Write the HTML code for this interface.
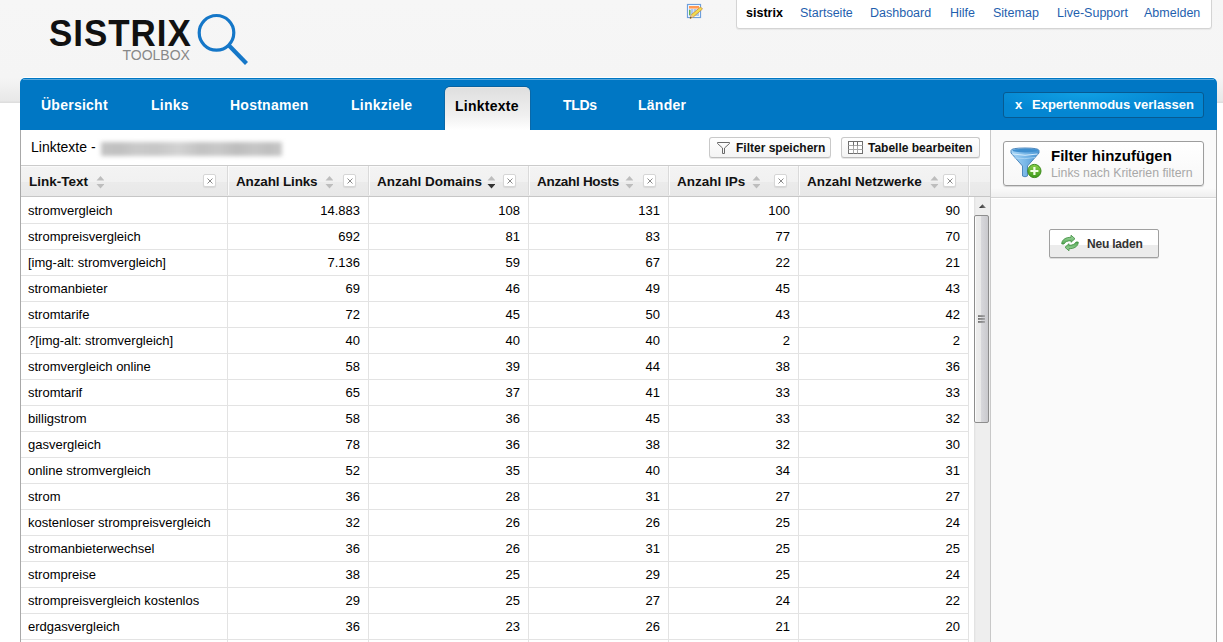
<!DOCTYPE html>
<html><head><meta charset="utf-8">
<style>
*{box-sizing:border-box;margin:0;padding:0}
html,body{width:1223px;height:642px;overflow:hidden;background:#fff;font-family:"Liberation Sans",sans-serif;color:#000}
.abs{position:absolute}
#hdr{position:absolute;left:0;top:0;width:1223px;height:103px;background:linear-gradient(#f6f6f6 0,#f5f5f5 78px,#e8e8e8 101px,#dedede 102px)}
#topnav{position:absolute;left:736px;top:-1px;width:476px;height:30px;background:#fff;border:1px solid #d4d4d4;border-radius:0 0 3px 3px;font-size:12.5px;box-shadow:0 1px 1px rgba(0,0,0,.06)}
#topnav span{position:absolute;top:6px;color:#1f5fae;white-space:nowrap}
#topnav b{position:absolute;top:6px;left:9px;color:#000}
#blue{position:absolute;left:20px;top:78px;width:1197px;height:52px;background:#0077c4;border-radius:5px 5px 0 0;box-shadow:0 -1px 0 #fff}
#blue:before{content:"";position:absolute;left:3px;right:3px;top:1px;height:1px;background:#58a8dd}
.tab{position:absolute;top:19px;color:#fff;font-weight:bold;font-size:14px;letter-spacing:.25px;white-space:nowrap}
#acttab{position:absolute;left:425px;top:9px;width:85px;height:43px;background:linear-gradient(#dfdfdf,#f0f0f0 65%,#fff);border-radius:5px 5px 0 0;box-shadow:0 -1px 0 #0862a0,-1px 0 0 #0a68a8,1px 0 0 #0a68a8;border-top:1px solid #ebe7e3}
#acttab span{position:absolute;left:10px;top:10px;color:#000;font-weight:bold;font-size:14px;letter-spacing:.25px}
#exp{position:absolute;left:983px;top:14px;width:201px;height:26px;border:1px solid #075a91;border-radius:3px;background:radial-gradient(ellipse 60% 100% at 40% 0,#10a0e4,#0486d2 80%);color:#fff;font-weight:bold;font-size:13px}
#exp span{position:absolute;top:4px;white-space:nowrap}
#content{position:absolute;left:20px;top:130px;width:1197px;height:512px;border-left:1px solid #a8a8a8;border-right:1px solid #a8a8a8}
#right{position:absolute;left:990px;top:130px;width:226px;height:512px;background:linear-gradient(#fafafa 0,#fafafa 58px,#efefef 67px,#fafafa 67px);border-left:1px solid #c8c8c8}
#title{position:absolute;left:31px;top:139px;font-size:14px;color:#000;white-space:nowrap}
#blur{position:absolute;left:101px;top:142px;width:181px;height:14px;background:linear-gradient(90deg,#c4c4c4 0,#c0c0c0 10%,#cacaca 20%,#c6c6c6 30%,#d2d2d2 43%,#c2c2c2 55%,#c8c8c8 65%,#bdbdbd 75%,#c6c6c6 85%,#bfbfbf 93%,#c8c8c8 100%);filter:blur(2px)}
.btn{position:absolute;top:137px;height:21px;border:1px solid #c9c9c9;border-bottom-color:#bdbdbd;border-radius:3px;background:linear-gradient(#fff,#f4f4f4);font-size:12px;font-weight:bold;color:#111;white-space:nowrap;box-shadow:0 1px 0 #e8e8e8}
.btn span{position:absolute;top:3px}
#thead{position:absolute;left:21px;top:165px;width:969px;height:32px;background:linear-gradient(#fafafa 0,#fafafa 1px,#f3f3f3 1px,#f1f1f1 16px,#ebebeb 16px,#e8e8e8 30px);border-top:1px solid #cbcbcb;border-bottom:1px solid #c6c6c6}
.th{position:absolute;top:174px;font-weight:bold;font-size:13.5px;color:#111;white-space:nowrap}
.hsep{position:absolute;top:166px;width:1px;height:29px;background:#dadada;box-shadow:1px 0 0 #fbfbfb}
.xb{position:absolute;top:174px;width:13px;height:13px;background:#fff;border:1px solid #d6d6d6;border-radius:2px;box-shadow:0 1px 1px rgba(0,0,0,.08)}
.sa{position:absolute;top:176px;width:8px;height:13px}
.vsep{position:absolute;top:197px;width:1px;height:445px;background:#e3e3e3}
.hline{position:absolute;left:21px;width:947px;height:1px;background:#e3e3e3}
.c{position:absolute;font-size:13px;color:#000;white-space:nowrap;line-height:15px}
.r{text-align:right}
</style></head><body>
<div id="hdr"></div>
<svg class="abs" style="left:0;top:0" width="260" height="70" viewBox="0 0 260 70">
<text x="49" y="46" font-family="Liberation Sans" font-weight="bold" font-size="35" letter-spacing="0.95" fill="#111" transform="translate(0 46) scale(1 1.075) translate(0 -46)">SISTRIX</text>
<text x="122.5" y="60" font-family="Liberation Sans" font-size="14" fill="#888">TOOLBOX</text>
<circle cx="216.5" cy="32.8" r="17.3" fill="none" stroke="#1577c8" stroke-width="3.2"/>
<line x1="228.5" y1="45" x2="246.5" y2="63.5" stroke="#1577c8" stroke-width="4.2"/>
</svg>
<svg class="abs" style="left:686px;top:3px" width="18" height="17" viewBox="0 0 18 17">
<rect x="1.5" y="1.5" width="13" height="13" fill="#fff" stroke="#6e9fdc" stroke-width="1.2"/>
<rect x="3" y="3" width="10" height="2.6" fill="#ff9a55"/>
<rect x="3" y="6" width="10" height="7" fill="#a9c8f0"/>
<path d="M4 7h1M7 7h1M10 7h1M4 9h1M7 9h1M4 11h1" stroke="#fff" stroke-width="1"/>
<path d="M3 7h1.5v5H3z" fill="#6ab04c"/>
<path d="M4 15.5 L5.5 11.5 L14.5 4 L16.5 6 L7.5 13.8 Z" fill="#f2dc4e" stroke="#c98d3a" stroke-width="0.8"/>
<path d="M4 15.5 L5.5 11.5 L7.5 13.8 Z" fill="#e6c49a"/><path d="M4 15.5 L4.6 13.8 L5.8 14.8Z" fill="#3a2a10"/>
</svg>
<div id="topnav"><b>sistrix</b><span style="left:63px">Startseite</span><span style="left:133px">Dashboard</span><span style="left:213px">Hilfe</span><span style="left:256px">Sitemap</span><span style="left:320px">Live-Support</span><span style="left:407px">Abmelden</span></div>
<div id="blue">
<span class="tab" style="left:21px">Übersicht</span>
<span class="tab" style="left:131px">Links</span>
<span class="tab" style="left:210px">Hostnamen</span>
<span class="tab" style="left:331px">Linkziele</span>
<div id="acttab"><span>Linktexte</span></div>
<span class="tab" style="left:543px;letter-spacing:-.3px">TLDs</span>
<span class="tab" style="left:618px">Länder</span>
<div id="exp"><span style="left:11px">x</span><span style="left:28px">Expertenmodus verlassen</span></div>
</div>
<div id="content"></div>
<div id="right"></div>
<div class="abs" style="left:991px;top:197px;width:225px;height:1px;background:#d4d4d4"></div>
<div class="abs" style="left:991px;top:198px;width:225px;height:1px;background:#fff"></div>
<div id="title">Linktexte -</div>
<div id="blur"></div>
<div class="btn" style="left:709px;width:122px">
<svg class="abs" style="left:7px;top:4px" width="14" height="13" viewBox="0 0 14 13"><path d="M0.5 0.5 H12.5 V1.5 L7.5 6 V11.5 H5.5 V6 L0.5 1.5 Z" fill="none" stroke="#6a6a6a" stroke-width="1"/></svg>
<span style="left:26px">Filter speichern</span></div>
<div class="btn" style="left:841px;width:139px">
<svg class="abs" style="left:6px;top:3px" width="16" height="14" viewBox="0 0 16 14"><rect x="0.5" y="0.5" width="14" height="12" fill="#fff" stroke="#6e6e6e"/><path d="M0.5 4.5H14.5M0.5 8.5H14.5M5.5 4.5V12.5M9.5 4.5V12.5" stroke="#a8a8a8" stroke-width="1"/><path d="M5.5 0.5V4.5M9.5 0.5V4.5" stroke="#6e6e6e" stroke-width="1"/></svg>
<span style="left:26px">Tabelle bearbeiten</span></div>
<div id="thead"></div>
<div class="th" style="left:29px;letter-spacing:0">Link-Text</div><svg class="sa" style="left:96px" viewBox="0 0 7 13"><path d="M4 0L8 4.5H0Z" fill="#bdbdbd"/><path d="M0 8H8L4 12.5Z" fill="#bdbdbd"/></svg><div class="xb" style="left:203px"><svg class="abs" style="left:3px;top:3px" width="6" height="6" viewBox="0 0 6 6"><path d="M0.5 0.5L5.5 5.5M5.5 0.5L0.5 5.5" stroke="#8a8a8a" stroke-width="1"/></svg></div><div class="th" style="left:236px;letter-spacing:-.15px">Anzahl Links</div><svg class="sa" style="left:325px" viewBox="0 0 7 13"><path d="M4 0L8 4.5H0Z" fill="#bdbdbd"/><path d="M0 8H8L4 12.5Z" fill="#bdbdbd"/></svg><div class="xb" style="left:343px"><svg class="abs" style="left:3px;top:3px" width="6" height="6" viewBox="0 0 6 6"><path d="M0.5 0.5L5.5 5.5M5.5 0.5L0.5 5.5" stroke="#8a8a8a" stroke-width="1"/></svg></div><div class="th" style="left:377px;letter-spacing:0">Anzahl Domains</div><svg class="sa" style="left:487px" viewBox="0 0 7 13"><path d="M4 0L8 4.5H0Z" fill="#bdbdbd"/><path d="M0 8H8L4 12.5Z" fill="#333"/></svg><div class="xb" style="left:503px"><svg class="abs" style="left:3px;top:3px" width="6" height="6" viewBox="0 0 6 6"><path d="M0.5 0.5L5.5 5.5M5.5 0.5L0.5 5.5" stroke="#8a8a8a" stroke-width="1"/></svg></div><div class="th" style="left:537px;letter-spacing:-.3px">Anzahl Hosts</div><svg class="sa" style="left:625px" viewBox="0 0 7 13"><path d="M4 0L8 4.5H0Z" fill="#bdbdbd"/><path d="M0 8H8L4 12.5Z" fill="#bdbdbd"/></svg><div class="xb" style="left:643px"><svg class="abs" style="left:3px;top:3px" width="6" height="6" viewBox="0 0 6 6"><path d="M0.5 0.5L5.5 5.5M5.5 0.5L0.5 5.5" stroke="#8a8a8a" stroke-width="1"/></svg></div><div class="th" style="left:677px;letter-spacing:0">Anzahl IPs</div><svg class="sa" style="left:752px" viewBox="0 0 7 13"><path d="M4 0L8 4.5H0Z" fill="#bdbdbd"/><path d="M0 8H8L4 12.5Z" fill="#bdbdbd"/></svg><div class="xb" style="left:774px"><svg class="abs" style="left:3px;top:3px" width="6" height="6" viewBox="0 0 6 6"><path d="M0.5 0.5L5.5 5.5M5.5 0.5L0.5 5.5" stroke="#8a8a8a" stroke-width="1"/></svg></div><div class="th" style="left:807px;letter-spacing:0">Anzahl Netzwerke</div><svg class="sa" style="left:930px" viewBox="0 0 7 13"><path d="M4 0L8 4.5H0Z" fill="#bdbdbd"/><path d="M0 8H8L4 12.5Z" fill="#bdbdbd"/></svg><div class="xb" style="left:943px"><svg class="abs" style="left:3px;top:3px" width="6" height="6" viewBox="0 0 6 6"><path d="M0.5 0.5L5.5 5.5M5.5 0.5L0.5 5.5" stroke="#8a8a8a" stroke-width="1"/></svg></div><div class="hsep" style="left:227px"></div><div class="hsep" style="left:368px"></div><div class="hsep" style="left:528px"></div><div class="hsep" style="left:668px"></div><div class="hsep" style="left:798px"></div><div class="hsep" style="left:968px"></div><div class="vsep" style="left:227px"></div><div class="vsep" style="left:368px"></div><div class="vsep" style="left:528px"></div><div class="vsep" style="left:668px"></div><div class="vsep" style="left:798px"></div><div class="vsep" style="left:968px"></div><div class="hline" style="top:223px"></div><div class="hline" style="top:249px"></div><div class="hline" style="top:275px"></div><div class="hline" style="top:301px"></div><div class="hline" style="top:327px"></div><div class="hline" style="top:353px"></div><div class="hline" style="top:379px"></div><div class="hline" style="top:405px"></div><div class="hline" style="top:431px"></div><div class="hline" style="top:457px"></div><div class="hline" style="top:483px"></div><div class="hline" style="top:509px"></div><div class="hline" style="top:535px"></div><div class="hline" style="top:561px"></div><div class="hline" style="top:587px"></div><div class="hline" style="top:613px"></div><div class="hline" style="top:639px"></div><div class="c" style="left:28px;top:203px">stromvergleich</div><div class="c r" style="right:863px;top:203px">14.883</div><div class="c r" style="right:703px;top:203px">108</div><div class="c r" style="right:563px;top:203px">131</div><div class="c r" style="right:433px;top:203px">100</div><div class="c r" style="right:263px;top:203px">90</div><div class="c" style="left:28px;top:229px">strompreisvergleich</div><div class="c r" style="right:863px;top:229px">692</div><div class="c r" style="right:703px;top:229px">81</div><div class="c r" style="right:563px;top:229px">83</div><div class="c r" style="right:433px;top:229px">77</div><div class="c r" style="right:263px;top:229px">70</div><div class="c" style="left:28px;top:255px">[img-alt: stromvergleich]</div><div class="c r" style="right:863px;top:255px">7.136</div><div class="c r" style="right:703px;top:255px">59</div><div class="c r" style="right:563px;top:255px">67</div><div class="c r" style="right:433px;top:255px">22</div><div class="c r" style="right:263px;top:255px">21</div><div class="c" style="left:28px;top:281px">stromanbieter</div><div class="c r" style="right:863px;top:281px">69</div><div class="c r" style="right:703px;top:281px">46</div><div class="c r" style="right:563px;top:281px">49</div><div class="c r" style="right:433px;top:281px">45</div><div class="c r" style="right:263px;top:281px">43</div><div class="c" style="left:28px;top:307px">stromtarife</div><div class="c r" style="right:863px;top:307px">72</div><div class="c r" style="right:703px;top:307px">45</div><div class="c r" style="right:563px;top:307px">50</div><div class="c r" style="right:433px;top:307px">43</div><div class="c r" style="right:263px;top:307px">42</div><div class="c" style="left:28px;top:333px">?[img-alt: stromvergleich]</div><div class="c r" style="right:863px;top:333px">40</div><div class="c r" style="right:703px;top:333px">40</div><div class="c r" style="right:563px;top:333px">40</div><div class="c r" style="right:433px;top:333px">2</div><div class="c r" style="right:263px;top:333px">2</div><div class="c" style="left:28px;top:359px">stromvergleich online</div><div class="c r" style="right:863px;top:359px">58</div><div class="c r" style="right:703px;top:359px">39</div><div class="c r" style="right:563px;top:359px">44</div><div class="c r" style="right:433px;top:359px">38</div><div class="c r" style="right:263px;top:359px">36</div><div class="c" style="left:28px;top:385px">stromtarif</div><div class="c r" style="right:863px;top:385px">65</div><div class="c r" style="right:703px;top:385px">37</div><div class="c r" style="right:563px;top:385px">41</div><div class="c r" style="right:433px;top:385px">33</div><div class="c r" style="right:263px;top:385px">33</div><div class="c" style="left:28px;top:411px">billigstrom</div><div class="c r" style="right:863px;top:411px">58</div><div class="c r" style="right:703px;top:411px">36</div><div class="c r" style="right:563px;top:411px">45</div><div class="c r" style="right:433px;top:411px">33</div><div class="c r" style="right:263px;top:411px">32</div><div class="c" style="left:28px;top:437px">gasvergleich</div><div class="c r" style="right:863px;top:437px">78</div><div class="c r" style="right:703px;top:437px">36</div><div class="c r" style="right:563px;top:437px">38</div><div class="c r" style="right:433px;top:437px">32</div><div class="c r" style="right:263px;top:437px">30</div><div class="c" style="left:28px;top:463px">online stromvergleich</div><div class="c r" style="right:863px;top:463px">52</div><div class="c r" style="right:703px;top:463px">35</div><div class="c r" style="right:563px;top:463px">40</div><div class="c r" style="right:433px;top:463px">34</div><div class="c r" style="right:263px;top:463px">31</div><div class="c" style="left:28px;top:489px">strom</div><div class="c r" style="right:863px;top:489px">36</div><div class="c r" style="right:703px;top:489px">28</div><div class="c r" style="right:563px;top:489px">31</div><div class="c r" style="right:433px;top:489px">27</div><div class="c r" style="right:263px;top:489px">27</div><div class="c" style="left:28px;top:515px">kostenloser strompreisvergleich</div><div class="c r" style="right:863px;top:515px">32</div><div class="c r" style="right:703px;top:515px">26</div><div class="c r" style="right:563px;top:515px">26</div><div class="c r" style="right:433px;top:515px">25</div><div class="c r" style="right:263px;top:515px">24</div><div class="c" style="left:28px;top:541px">stromanbieterwechsel</div><div class="c r" style="right:863px;top:541px">36</div><div class="c r" style="right:703px;top:541px">26</div><div class="c r" style="right:563px;top:541px">31</div><div class="c r" style="right:433px;top:541px">25</div><div class="c r" style="right:263px;top:541px">25</div><div class="c" style="left:28px;top:567px">strompreise</div><div class="c r" style="right:863px;top:567px">38</div><div class="c r" style="right:703px;top:567px">25</div><div class="c r" style="right:563px;top:567px">29</div><div class="c r" style="right:433px;top:567px">25</div><div class="c r" style="right:263px;top:567px">24</div><div class="c" style="left:28px;top:593px">strompreisvergleich kostenlos</div><div class="c r" style="right:863px;top:593px">29</div><div class="c r" style="right:703px;top:593px">25</div><div class="c r" style="right:563px;top:593px">27</div><div class="c r" style="right:433px;top:593px">24</div><div class="c r" style="right:263px;top:593px">22</div><div class="c" style="left:28px;top:619px">erdgasvergleich</div><div class="c r" style="right:863px;top:619px">36</div><div class="c r" style="right:703px;top:619px">23</div><div class="c r" style="right:563px;top:619px">26</div><div class="c r" style="right:433px;top:619px">21</div><div class="c r" style="right:263px;top:619px">20</div><div class="abs" style="left:974px;top:197px;width:16px;height:445px;background:linear-gradient(90deg,#e0e0e0 0,#e6e6e6 1px,#eee 2px)"></div>
<svg class="abs" style="left:978px;top:203px" width="9" height="6" viewBox="0 0 9 6"><defs><linearGradient id="ag" x1="0" x2="1"><stop offset="0" stop-color="#222"/><stop offset="1" stop-color="#888"/></linearGradient></defs><path d="M1 5L4.5 1.2L8 5Z" fill="url(#ag)"/></svg>
<div class="abs" style="left:974px;top:215px;width:15px;height:208px;border:1px solid #8d8d8d;border-radius:2px;background:linear-gradient(90deg,#fbfbfb 0,#fbfbfb 1px,#ededed 1px,#e9e9e9 6px,#d8d8dc 6px,#c9c9cd 13px)"></div>
<svg class="abs" style="left:978px;top:315px" width="8" height="8" viewBox="0 0 8 8"><defs><linearGradient id="gr" x1="0" x2="1"><stop offset="0" stop-color="#222"/><stop offset="1" stop-color="#888"/></linearGradient></defs><rect x="0" y="0.5" width="7" height="1.1" fill="url(#gr)"/><rect x="0" y="3.4" width="7" height="1.1" fill="url(#gr)"/><rect x="0" y="6.4" width="7" height="1.1" fill="url(#gr)"/></svg>
<div class="abs" style="left:1003px;top:141px;width:201px;height:45px;border:1px solid #9d9d9d;border-radius:3px;background:linear-gradient(#fff,#f7f7f7);box-shadow:0 1px 1px rgba(0,0,0,.15)"></div>
<svg class="abs" style="left:1008px;top:145px" width="36" height="36" viewBox="0 0 36 36">
<defs><linearGradient id="fg" x1="0" x2="1"><stop offset="0" stop-color="#a8d6f6"/><stop offset=".5" stop-color="#7ab8e8"/><stop offset="1" stop-color="#4a96d4"/></linearGradient>
<linearGradient id="gg" x1="0" y1="0" x2="0" y2="1"><stop offset="0" stop-color="#8ad04a"/><stop offset="1" stop-color="#3f9a1c"/></linearGradient></defs>
<path d="M3 5.5 Q3 3 17 3 Q31 3 31 5.5 V8 L19.5 21 V31 Q17 32.5 14.5 31 V21 L3 8Z" fill="url(#fg)" stroke="#4f88bd" stroke-width="1"/>
<ellipse cx="17" cy="5.6" rx="12.6" ry="1.8" fill="#3f8fcf"/>
<path d="M4.5 9 Q17 11.5 29.5 9" fill="none" stroke="#d6ecfb" stroke-width="1"/>
<path d="M6 13 Q17 14.5 27 12.5" fill="none" stroke="#b8dcf6" stroke-width=".7"/>
<circle cx="26.4" cy="26" r="6.6" fill="url(#gg)" stroke="#3a8a1a" stroke-width="1"/>
<path d="M26.4 22V30M22.4 26H30.4" stroke="#f4ffe8" stroke-width="2.2"/>
</svg>
<div class="abs" style="left:1051px;top:147px;font-size:15px;font-weight:bold;color:#000;white-space:nowrap">Filter hinzufügen</div>
<div class="abs" style="left:1051px;top:166px;font-size:12.3px;color:#a8a8a8;white-space:nowrap">Links nach Kriterien filtern</div>
<div class="abs" style="left:1049px;top:229px;width:110px;height:29px;border:1px solid #a0a0a0;border-radius:2px;background:linear-gradient(#fff 0,#fff 55%,#ececec 55%,#ececec);box-shadow:0 1px 0 #ddd"></div>
<svg class="abs" style="left:1058px;top:232px" width="24" height="22" viewBox="0 0 24 22">
<defs><linearGradient id="rg" x1="0" y1="0" x2="0" y2="1"><stop offset="0" stop-color="#a3d8a3"/><stop offset="1" stop-color="#54a854"/></linearGradient></defs>
<path id="ra" d="M3.8 12 V10.8 C4.5 7.3 8 5.3 13 5.3 V3.2 L17 6.7 L13 10.3 V8.7 C9.8 8.7 7.2 9.6 6 12 Z" fill="url(#rg)" stroke="#3d8d3d" stroke-width="0.8" stroke-linejoin="round"/>
<path d="M3.8 12 V10.8 C4.5 7.3 8 5.3 13 5.3 V3.2 L17 6.7 L13 10.3 V8.7 C9.8 8.7 7.2 9.6 6 12 Z" transform="rotate(180 12 11)" fill="url(#rg)" stroke="#3d8d3d" stroke-width="0.8" stroke-linejoin="round"/>
</svg>
<div class="abs" style="left:1087px;top:237px;font-size:12px;font-weight:bold;color:#333;white-space:nowrap;letter-spacing:-.2px">Neu laden</div>
</body></html>
